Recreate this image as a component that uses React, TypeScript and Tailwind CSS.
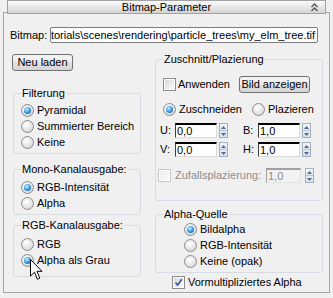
import React from "react";

const Radio = ({ checked }: { checked?: boolean }) => (
  <span className="w-[13px] h-[13px] shrink-0 rounded-full border border-[#8c8c8c] bg-[radial-gradient(circle_at_40%_35%,#ffffff,#e2e2e2_60%,#c9c9c9)] flex items-center justify-center">
    {checked && (
      <span className="w-[7px] h-[7px] rounded-full bg-[radial-gradient(circle_at_40%_35%,#c4f0ff,#2f93e0_55%,#0b4f98)]" />
    )}
  </span>
);

const Check = ({ checked, disabled }: { checked?: boolean; disabled?: boolean }) => (
  <span
    className={`w-[13px] h-[13px] shrink-0 border p-[1px] bg-white ${
      disabled ? "border-[#c6c6c6]" : "border-[#8c8c8c]"
    }`}
  >
    <span
      className={`relative block w-full h-full ${
        disabled
          ? "bg-[linear-gradient(135deg,#ececec,#fafafa)]"
          : "bg-[linear-gradient(135deg,#d8d8d8,#fbfbfb)]"
      }`}
    >
      {checked && (
        <svg viewBox="0 0 9 9" className="absolute inset-0 w-full h-full">
          <path d="M1.5 4.5 L3.6 7 L7.8 1.2" fill="none" stroke="#3a5894" strokeWidth="1.7" />
        </svg>
      )}
    </span>
  </span>
);

const Spinner = ({ className = "" }: { className?: string }) => (
  <span className={`w-[9px] h-[15px] shrink-0 flex flex-col border border-[#a5b0bf] bg-[linear-gradient(#f1f5fa,#d8e1eb)] ${className}`}>
    <span className="flex-1 flex items-center justify-center border-b border-[#b8c2ce]">
      <svg width="5" height="3" viewBox="0 0 5 3">
        <path d="M0 3 L2.5 0 L5 3 Z" fill="#4f6b96" />
      </svg>
    </span>
    <span className="flex-1 flex items-center justify-center">
      <svg width="5" height="3" viewBox="0 0 5 3">
        <path d="M0 0 L2.5 3 L5 0 Z" fill="#4f6b96" />
      </svg>
    </span>
  </span>
);

const NumField = ({ value, disabled, w = "w-[42px]" }: { value: string; disabled?: boolean; w?: string }) => (
  <span
    className={`${w} h-[15px] shrink-0 flex items-center pl-[1px] border-t-2 border-l border-r border-b leading-none ${
      disabled
        ? "border-t-[#a0a0a0] border-l-[#a0a0a0] border-r-[#e3e3e3] border-b-[#e3e3e3] bg-[#f2f2f2] text-[#8d8d8d]"
        : "border-t-black border-l-[#404040] border-r-[#dcdcdc] border-b-[#dcdcdc] bg-white"
    }`}
  >
    {value}
  </span>
);

const Group = ({
  title,
  className = "",
  inner = "",
  children,
}: {
  title: string;
  className?: string;
  inner?: string;
  children: React.ReactNode;
}) => (
  <fieldset className={`border border-[#d5dbe0] rounded-[3px] ${className}`}>
    <legend className="ml-[7px] px-[1px] leading-[13px]">{title}</legend>
    <div className={inner}>{children}</div>
  </fieldset>
);

const RadioRow = ({ label, checked }: { label: string; checked?: boolean }) => (
  <div className="h-[16px] flex items-center gap-[3px]">
    <Radio checked={checked} />
    <span>{label}</span>
  </div>
);

const WinButton = ({ label, className = "" }: { label: string; className?: string }) => (
  <div
    className={`h-[17px] flex items-center justify-center whitespace-nowrap border border-[#707070] rounded-[3px] bg-[linear-gradient(#f4f4f4,#ececec_50%,#e0e0e0_50%,#d6d6d6)] ${className}`}
  >
    {label}
  </div>
);

export default function App() {
  return (
    <div className="relative w-[333px] h-[298px] overflow-hidden bg-[#f0f0f0] text-black text-[11px] font-['Liberation_Sans',Arial,sans-serif]">
      {/* rollout title */}
      <div className="relative z-10 ml-[7px] w-[319px] h-[14px] flex items-center justify-center border border-[#a2a2a2] bg-[linear-gradient(#fbfbfb,#e4e4e4_60%,#d2d2d2)] leading-none">
        <span>Bitmap-Parameter</span>
        <svg className="absolute right-[7px] top-[2px]" width="7" height="9" viewBox="0 0 7 9">
          <path d="M0.5 4 L3.5 1 L6.5 4 M0.5 8 L3.5 5 L6.5 8" fill="none" stroke="#505050" strokeWidth="1.3" />
        </svg>
      </div>

      {/* rollout frame */}
      <div className="-mt-[2px] ml-[3px] w-[327px] h-[281px] border border-[#a5a5a5]">
        <div className="mt-[14px] pl-[6px] flex items-center h-[16px]">
          <span className="w-[40px] whitespace-nowrap">Bitmap:</span>
          <div className="w-[268px] h-[16px] flex justify-end items-center overflow-hidden whitespace-nowrap border border-[#7d7d7d] rounded-[2px] bg-white pr-[2px]">
            torials\scenes\rendering\particle_trees\my_elm_tree.tif
          </div>
        </div>

        <div className="mt-[10px] pl-[8px] flex gap-[14px] items-start">
          {/* left column */}
          <div className="w-[129px] pt-[1px] flex flex-col">
            <WinButton label="Neu laden" className="w-[61px]" />
            <Group title="Filterung" className="mt-[16px] ml-[1px] w-[128px]" inner="pt-[2px] pb-[3px] pl-[7px]">
              <RadioRow label="Pyramidal" checked />
              <RadioRow label="Summierter Bereich" />
              <RadioRow label="Keine" />
            </Group>
            <Group title="Mono-Kanalausgabe:" className="mt-[9px] ml-[1px] w-[128px]" inner="pt-[3px] pb-[3px] pl-[7px]">
              <RadioRow label="RGB-Intensität" checked />
              <RadioRow label="Alpha" />
            </Group>
            <Group title="RGB-Kanalausgabe:" className="mt-[4px] ml-[1px] w-[128px]" inner="pt-[4px] pb-[8px] pl-[7px]">
              <RadioRow label="RGB" />
              <RadioRow label="Alpha als Grau" checked />
            </Group>
          </div>

          {/* right column */}
          <div className="w-[168px] flex flex-col">
            <Group title="Zuschnitt/Plazierung" className="w-[168px]" inner="pt-[10px] pb-[17px]">
              <div className="h-[17px] flex items-center pl-[7px]">
                <Check />
                <span className="ml-[2px] w-[61px]">Anwenden</span>
                <WinButton label="Bild anzeigen" className="w-[71px]" />
              </div>
              <div className="mt-[8px] h-[16px] flex items-center pl-[7px]">
                <Radio checked />
                <span className="ml-[3px] w-[73px]">Zuschneiden</span>
                <Radio />
                <span className="ml-[3px]">Plazieren</span>
              </div>
              <div className="mt-[6px] h-[15px] flex items-center pl-[4px]">
                <span className="w-[15px]">U:</span>
                <NumField value="0,0" />
                <Spinner className="ml-[2px]" />
                <span className="ml-[15px] w-[15px]">B:</span>
                <NumField value="1,0" />
                <Spinner className="ml-[2px]" />
              </div>
              <div className="mt-[4px] h-[15px] flex items-center pl-[4px]">
                <span className="w-[15px]">V:</span>
                <NumField value="0,0" />
                <Spinner className="ml-[2px]" />
                <span className="ml-[15px] w-[15px]">H:</span>
                <NumField value="1,0" />
                <Spinner className="ml-[2px]" />
              </div>
              <div className="mt-[11px] h-[15px] flex items-center pl-[2px]">
                <Check disabled />
                <span className="ml-[4px] w-[91px] text-[#8d8d8d] whitespace-nowrap">Zufallsplazierung:</span>
                <NumField value="1,0" disabled w="w-[35px]" />
                <Spinner className="ml-[4px]" />
              </div>
            </Group>
            <Group title="Alpha-Quelle" className="mt-[7px] w-[168px]" inner="pb-[3px] pl-[28px]">
              <RadioRow label="Bildalpha" checked />
              <RadioRow label="RGB-Intensität" />
              <RadioRow label="Keine (opak)" />
            </Group>
            <div className="mt-[3px] h-[13px] flex items-center pl-[17px]">
              <Check checked />
              <span className="ml-[3px]">Vormultipliziertes Alpha</span>
            </div>
          </div>
        </div>
      </div>

      {/* mouse pointer */}
      <svg className="absolute left-[30px] top-[259px]" width="13" height="22" viewBox="0 0 13 22">
        <path
          d="M0.5 0.5 L0.5 17 L4.5 13.2 L7.3 20.2 L9.8 19.2 L7 12.3 L12 12.3 Z"
          fill="#ffffff"
          stroke="#000000"
          strokeWidth="1"
          strokeLinejoin="round"
        />
      </svg>
    </div>
  );
}
